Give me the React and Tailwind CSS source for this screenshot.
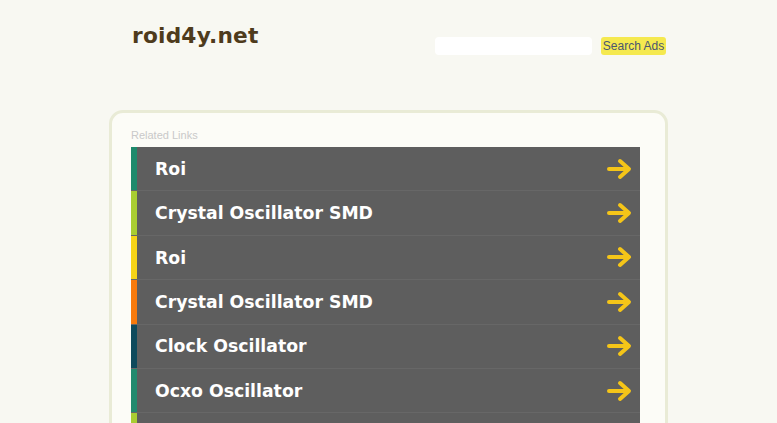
import React from 'react'

const links = [
  { label: 'Roi', color: 'bg-[#1e8a6c]' },
  { label: 'Crystal Oscillator SMD', color: 'bg-[#a9cd32]' },
  { label: 'Roi', color: 'bg-[#f6d417]' },
  { label: 'Crystal Oscillator SMD', color: 'bg-[#f77a0c]' },
  { label: 'Clock Oscillator', color: 'bg-[#0e4a5c]' },
  { label: 'Ocxo Oscillator', color: 'bg-[#228a6e]' },
  { label: '', color: 'bg-[#a9cd32]' }
]

function Arrow() {
  return (
    <svg width="26" height="22" viewBox="0 0 26 22" fill="none">
      <path d="M2 11h19" stroke="#f5c518" strokeWidth="4" strokeLinecap="round" />
      <path d="M13 3l9 8-9 8" stroke="#f5c518" strokeWidth="4" strokeLinecap="round" strokeLinejoin="round" />
    </svg>
  )
}

export default function App() {
  return (
    <div className="w-[777px] h-[423px] overflow-hidden bg-[#f8f8f2] font-['DejaVu_Sans',sans-serif]">
      <div className="flex items-start justify-between pl-[132px] pr-[111px] pt-[22px]">
        <div className="text-[21.7px] font-bold text-[#4e3b1c] leading-[28px] tracking-[0.2px]">roid4y.net</div>
        <div className="flex items-center gap-[9px] mt-[15px]">
          <input className="w-[157px] h-[18px] rounded-[4px] bg-white outline-none" />
          <button className="w-[65px] h-[18px] rounded-[3px] bg-[#f5e94f] text-[12px] text-[#4a5670] leading-[18px] font-['Liberation_Sans',sans-serif]">
            Search Ads
          </button>
        </div>
      </div>

      <div className="ml-[109px] mt-[55px] w-[559px] h-[400px] rounded-[14px] border-[3px] border-[#e9ebd6] bg-[#fcfcf7] pl-[19px] pt-[15px]">
        <div className="text-[11px] leading-[14px] text-[#c9c9c9] font-['Liberation_Sans',sans-serif] mb-[5px]">Related Links</div>
        <div className="w-[509px] flex flex-col">
          {links.map((l, i) => (
            <div key={i} className="flex h-[44.4px] bg-[#5e5e5e] border-b border-[#676767]">
              <div className={`w-[6px] ${l.color}`} />
              <div className="flex-1 flex items-center justify-between pl-[18px] pr-[7px]">
                <span className="text-[17.3px] font-bold text-white pt-[2px]">{l.label}</span>
                <Arrow />
              </div>
            </div>
          ))}
        </div>
      </div>
    </div>
  )
}
